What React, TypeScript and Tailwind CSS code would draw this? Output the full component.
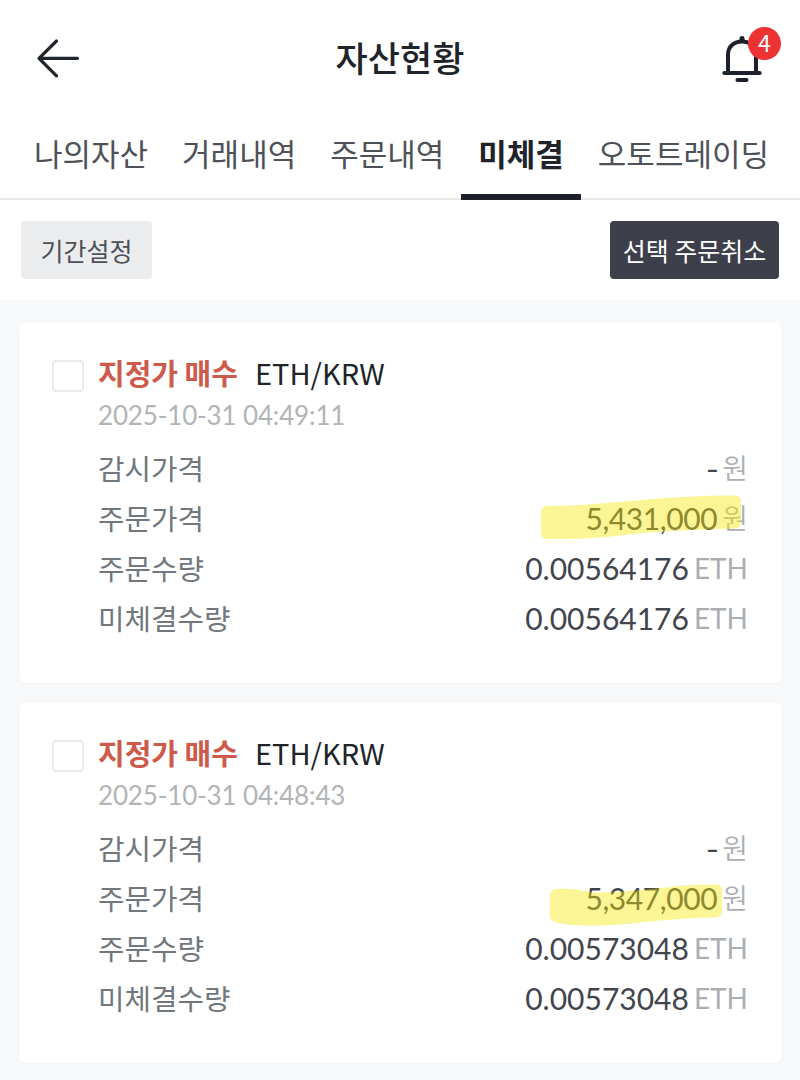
import { useState } from "react";
import clsx from "clsx";

const TABS = ["나의자산", "거래내역", "주문내역", "미체결", "오토트레이딩"];

type Order = {
  id: number;
  date: string;
  price: string;
  amount: string;
  remaining: string;
  marker: string;
};

// marker paths share the coordinates of a 220x54 box at the right end of the price row
const ORDERS: Order[] = [
  {
    id: 1,
    date: "2025-10-31 04:49:11",
    price: "5,431,000",
    amount: "0.00564176",
    remaining: "0.00564176",
    marker:
      "M13 18 Q13 12 19 12 C48 12 78 9 108 6.500 C145 3 175 1.500 206 1.500 Q213 1.500 213 8 V28 Q213 34 206 34.500 C170 35.500 130 37 96 41 C68 45 44 45 19 45 Q13 45 13 38 Z",
  },
  {
    id: 2,
    date: "2025-10-31 04:48:43",
    price: "5,347,000",
    amount: "0.00573048",
    remaining: "0.00573048",
    marker:
      "M22 22 Q22 15 29 15 C44 14 54 17 66 18.500 C98 19 136 13 164 11 C176 10 182 10.500 188 10.500 Q194 10.500 194 16 V37 Q194 43 187 43.500 C155 44 125 47 98 50 C78 52 56 52 42 51 C32 49 22 49 22 42 Z",
  },
];

function BackIcon() {
  return (
    <svg width="46" height="44" viewBox="0 0 46 44" fill="none" stroke="#20252b" strokeWidth="3.200" strokeLinecap="round" strokeLinejoin="round">
      <path d="M42.500 22.300H4M21.500 5L4 22.300L21.500 39.800" />
    </svg>
  );
}

function BellIcon() {
  return (
    <svg width="40" height="48" viewBox="0 0 40 48" fill="none" stroke="#1d212b" strokeLinecap="round">
      <path d="M6 37V20.500C6 12.500 12 7.500 20 7.500S34 12.500 34 20.500V37" strokeWidth="4" />
      <path d="M2.300 39H37.700" strokeWidth="4" />
      <path d="M20 4.500V6.500" strokeWidth="5" />
      <path d="M15.500 46H24.500" strokeWidth="4" />
    </svg>
  );
}

function Row({ label, value, unit, marker }: { label: string; value: string; unit: string; marker?: string }) {
  return (
    <div className="relative flex h-[50px] items-center justify-between">
      <span className="pb-0.5 text-[28.800px] text-[#70777d]">{label}</span>
      <span className="flex items-center gap-[5px] pb-[3px]">
        <span
          className={clsx(
            "font-[Lato,'Noto_Sans_CJK_KR',sans-serif] text-[30px] text-[#42454e]",
            marker && "tracking-[-0.4px]",
            value === "-" && "-mr-0.5 origin-right scale-x-120"
          )}
        >
          {value}
        </span>
        <span className={clsx("text-[#abafb3]", unit === "ETH" ? "pt-px font-[Lato,sans-serif] text-[28px]" : "pb-0.5 text-[28px] font-[350]")}>
          {unit}
        </span>
      </span>
      {marker && (
        <svg className="absolute right-0 top-0" width="220" height="54" viewBox="0 0 220 54">
          <path d={marker} fill="#f5e705" fillOpacity="0.42" />
        </svg>
      )}
    </div>
  );
}

function OrderCard({ order }: { order: Order }) {
  const [checked, setChecked] = useState(false);

  return (
    <div className="flex h-[363px] gap-[14px] rounded-lg border border-[#f2f4f6] bg-white pl-[33px] pr-[34px] pt-[38px]">
      <button
        aria-pressed={checked}
        onClick={() => setChecked(!checked)}
        className={clsx("size-8 shrink-0 rounded border-2 border-[#e9eaeb]", checked && "bg-[#3d404b]")}
      />
      <div className="flex-1">
        <div className="-mt-1.5 flex h-9 items-center gap-[17px] text-[29px]">
          <span className="font-bold text-[#cd5a4b]">지정가 매수</span>
          <span className="text-[#202329]">ETH/KRW</span>
        </div>
        <div className="mt-0.5 flex h-[46px] items-center font-[Lato,sans-serif] text-[26px] tracking-[-0.15px] text-[#b2b4b7]">{order.date}</div>
        <div className="mt-[6px]">
          <Row label="감시가격" value="-" unit="원" />
          <Row label="주문가격" value={order.price} unit="원" marker={order.marker} />
          <Row label="주문수량" value={order.amount} unit="ETH" />
          <Row label="미체결수량" value={order.remaining} unit="ETH" />
        </div>
      </div>
    </div>
  );
}

export default function App() {
  const [tab, setTab] = useState("미체결");

  return (
    <div className="h-[1080px] w-[800px] overflow-hidden whitespace-nowrap bg-[#f7f8fa] font-['Noto_Sans_CJK_KR',sans-serif] leading-none">
      <header className="grid h-[116px] grid-cols-3 items-center bg-white pl-[35px] pr-[38px]">
        <button className="justify-self-start"><BackIcon /></button>
        <h1 className="justify-self-center pb-[3px] pl-[3px] text-[35px] font-medium text-[#202329]">자산현황</h1>
        <button className="relative justify-self-end">
          <BellIcon />
          <span className="absolute -right-[19px] -top-[7px] flex size-[33px] items-center justify-center rounded-full bg-[#ee3234] pb-0.5 text-[23px] text-white">
            4
          </span>
        </button>
      </header>

      <nav className="flex h-[84px] border-b-2 border-[#e8e8e9] bg-white pl-[17px]">
        {TABS.map((name) => (
          <button
            key={name}
            onClick={() => setTab(name)}
            className={clsx(
              "-mb-0.5 flex items-center px-[17px] text-[31px]",
              tab === name ? "border-b-[6px] border-[#1d212b] pb-[5px] font-bold text-[#202329]" : "pb-[11px] text-[#4e5157]"
            )}
          >
            {name}
          </button>
        ))}
      </nav>

      <div className="flex h-[100px] items-center justify-between bg-white px-[21px]">
        <button className="h-[58px] w-[131px] rounded bg-[#ebecee] text-[25px] text-[#4d5057]">기간설정</button>
        <button className="h-[58px] w-[169px] rounded bg-[#3d404b] text-[25px] text-white">선택 주문취소</button>
      </div>

      <main className="flex flex-col gap-[17px] pl-[18px] pr-[17px] pt-[21px]">
        {ORDERS.map((order) => (
          <OrderCard key={order.id} order={order} />
        ))}
      </main>
    </div>
  );
}
